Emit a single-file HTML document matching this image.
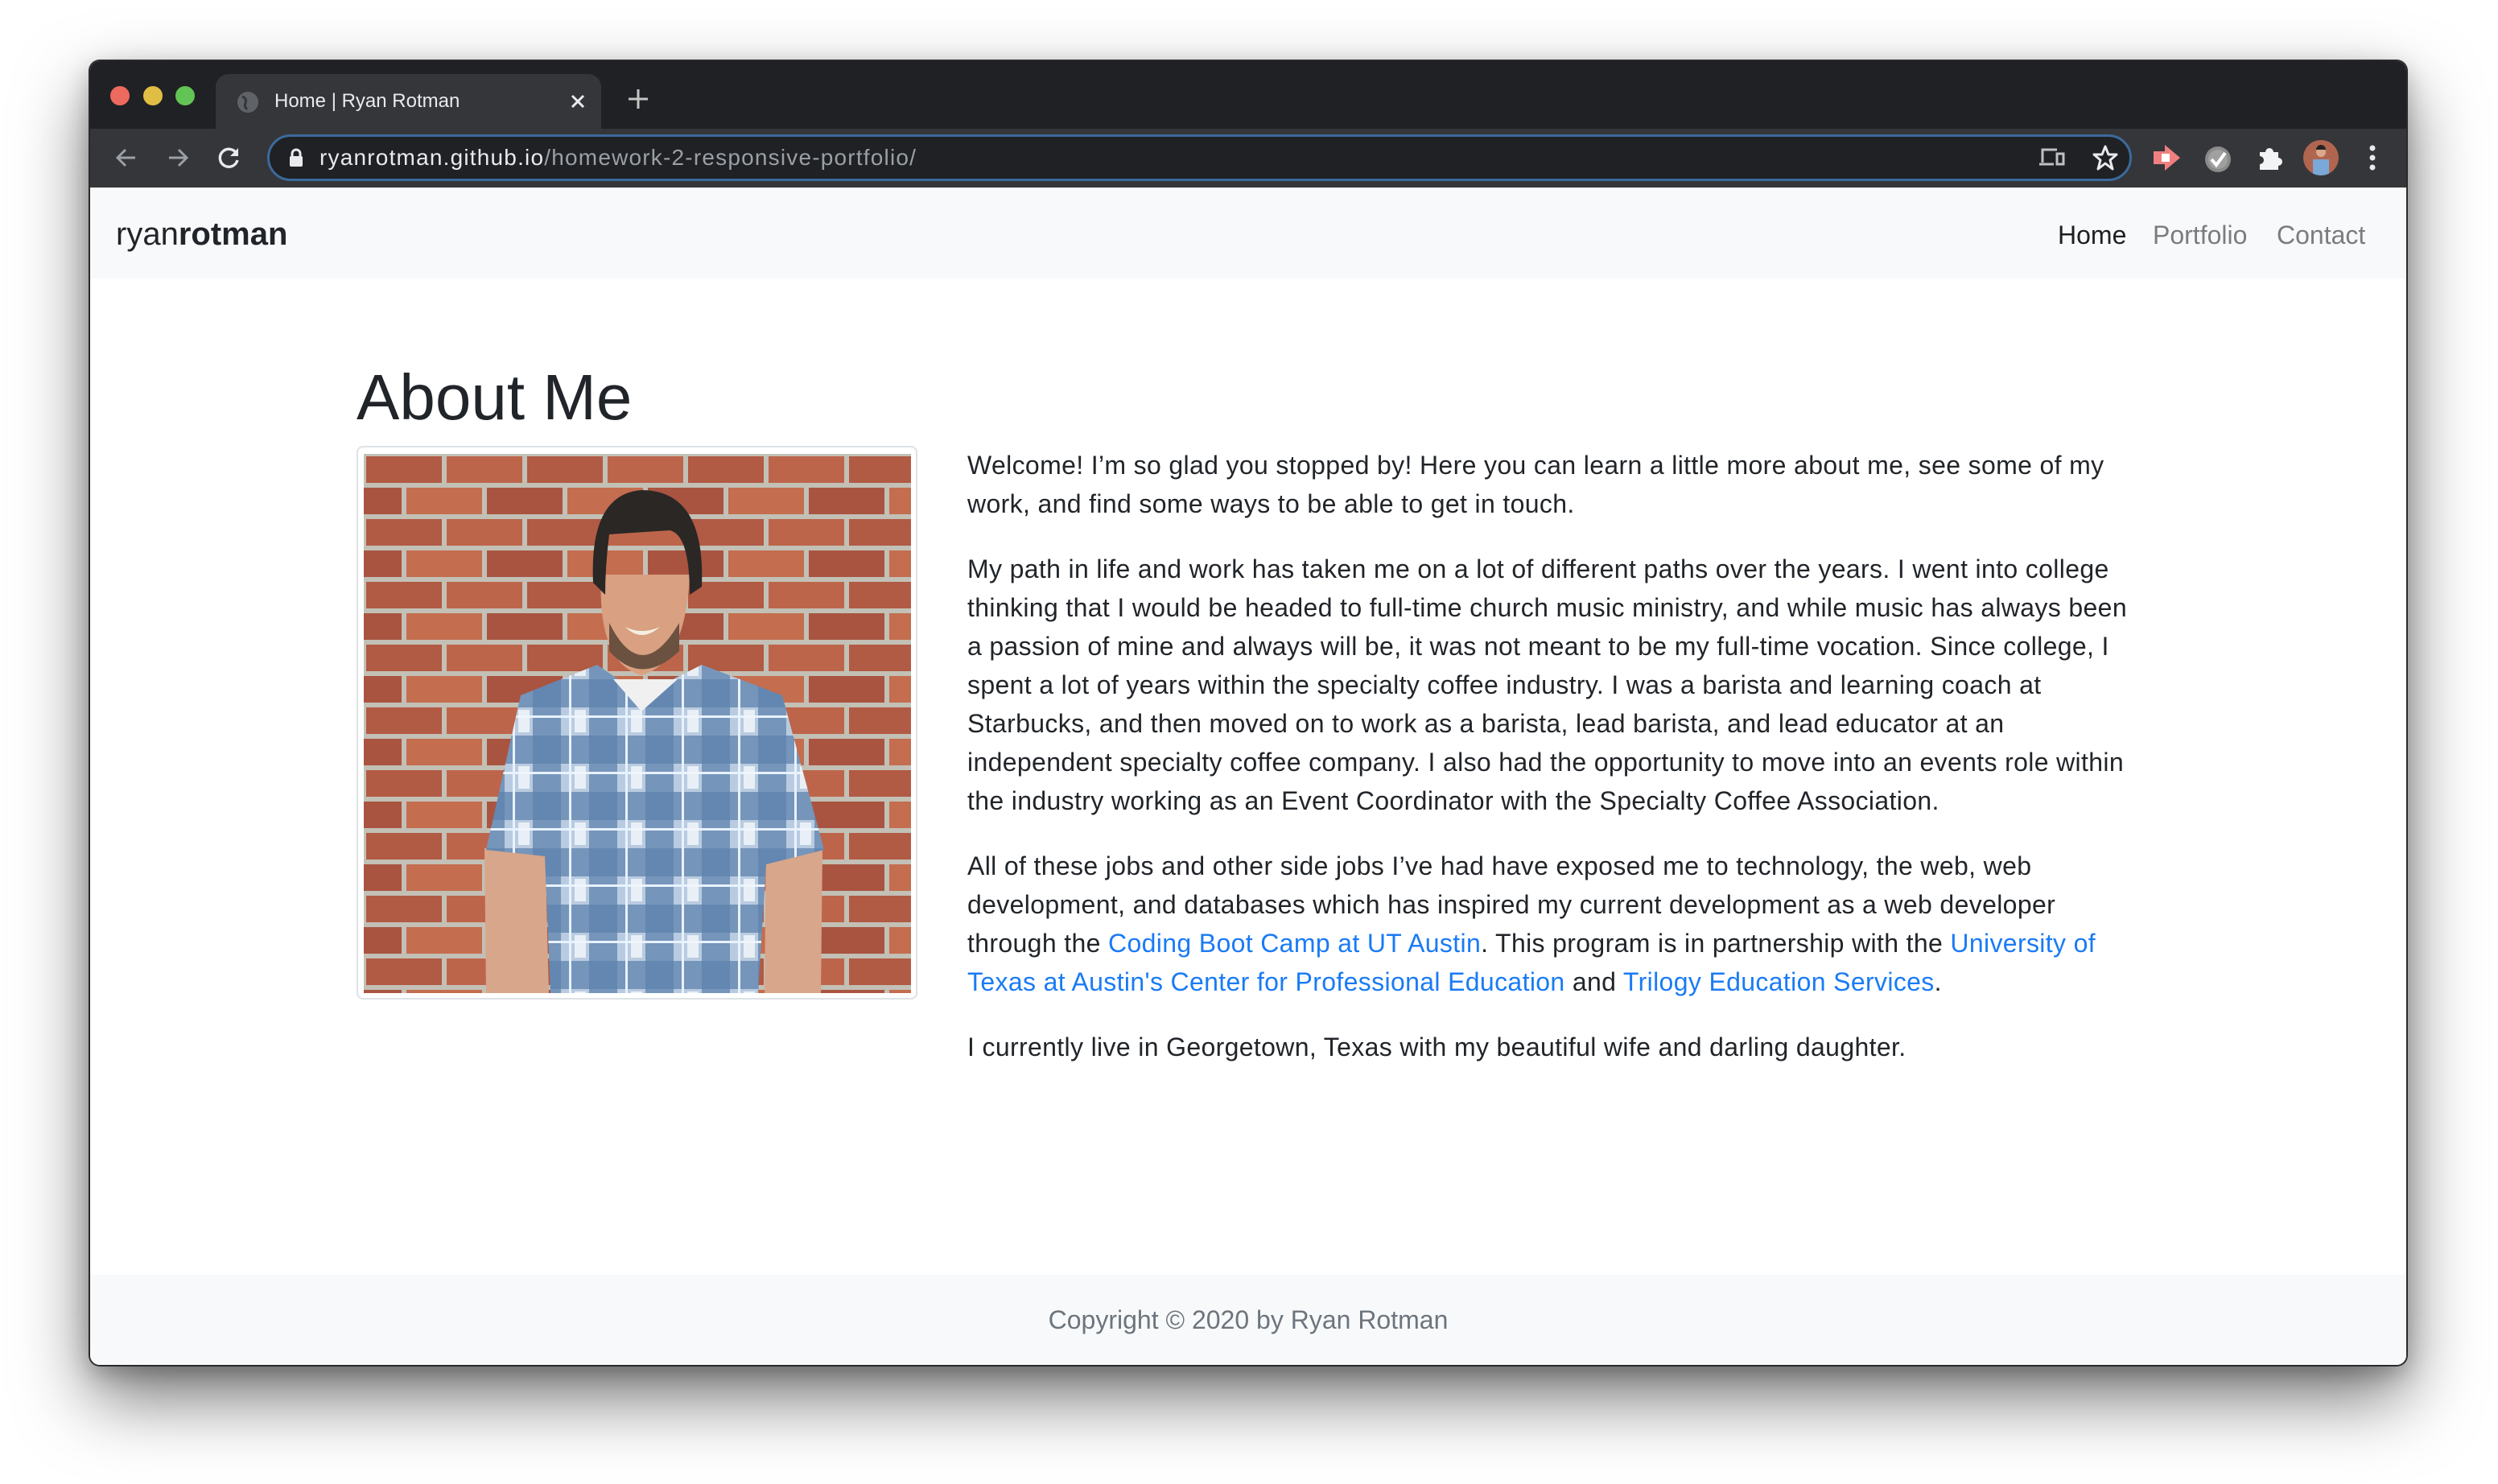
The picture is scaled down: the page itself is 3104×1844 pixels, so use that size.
<!DOCTYPE html>
<html><head><meta charset="utf-8">
<style>
*{margin:0;padding:0;box-sizing:border-box}
html,body{width:3104px;height:1844px;background:#fff;overflow:hidden;font-family:"Liberation Sans",Arial,sans-serif}
.win{position:absolute;left:112px;top:76px;width:2878px;height:1620px;border-radius:12px;overflow:hidden;background:#fff;box-shadow:0 0 0 2px #2a2a2a,0 40px 90px rgba(0,0,0,.55),0 10px 30px rgba(0,0,0,.25)}
.tabs{position:absolute;left:0;top:0;width:100%;height:84px;background:#202124}
.tb{position:absolute;left:0;top:84px;width:100%;height:73px;background:#35363a}
.dot{position:absolute;top:31px;width:24px;height:24px;border-radius:50%}
.tab{position:absolute;left:156px;top:16px;width:479px;height:70px;background:#35363a;border-radius:16px 16px 0 0}
.tab span{position:absolute;left:73px;top:20px;color:#e8eaed;font-size:24px}
.omni{position:absolute;left:220px;top:7px;width:2317px;height:58px;border-radius:29px;background:#202124;border:3px solid #3b6a9c}
.url{position:absolute;left:62px;top:10px;font-size:28px;color:#e8eaed;white-space:nowrap;letter-spacing:1.2px}
.url i{font-style:normal;color:#9aa0a6}
.nav{position:absolute;left:0;top:157px;width:100%;height:113px;background:#f8f9fa}
.brand{position:absolute;left:32px;top:36px;font-size:40px;color:#212529}
.nl{position:absolute;top:41px;font-size:32px;color:#7a7c7f}
h1{position:absolute;left:331px;top:372px;font-size:80px;font-weight:500;color:#212529}
.frame{position:absolute;left:331px;top:478px;width:697px;height:688px;border:2px solid #dee2e6;border-radius:8px;background:#fff}
.txt{position:absolute;left:1090px;top:478px;font-size:32px;line-height:48px;color:#212529;white-space:nowrap;letter-spacing:0.35px}
.txt p{margin-bottom:33px}
.txt a{color:#1a7bf5;text-decoration:none}
.foot{position:absolute;left:0;top:1508px;width:100%;height:112px;background:#f8f9fa;text-align:center;font-size:32px;line-height:112px;color:#6c757d}
</style></head><body>
<div class="win">
 <div class="tabs">
  <div class="dot" style="left:25px;background:#ed6a5e"></div>
  <div class="dot" style="left:66px;background:#e0be45"></div>
  <div class="dot" style="left:106px;background:#61c454"></div>
  <div class="tab"><svg style="position:absolute;left:25px;top:20px" width="30" height="30" viewBox="0 0 30 30"><circle cx="15" cy="15" r="13" fill="#5f6368"/><path d="M8 8 q6 2 4 8 q-2 4 2 8" stroke="#35363a" stroke-width="3" fill="none"/></svg><span>Home | Ryan Rotman</span>
  <svg style="position:absolute;left:440px;top:24px" width="20" height="20" viewBox="0 0 20 20"><path d="M3 3L17 17M17 3L3 17" stroke="#e8eaed" stroke-width="3"/></svg></div>
  <svg style="position:absolute;left:668px;top:34px" width="26" height="26" viewBox="0 0 26 26"><path d="M13 1V25M1 13H25" stroke="#c4c7c5" stroke-width="3"/></svg>
 </div>
 <div class="tb">
  <svg style="position:absolute;left:30px;top:21px" width="30" height="30" viewBox="0 0 30 30"><path d="M26 15H5M14 5L4 15L14 25" stroke="#9aa0a6" stroke-width="3" fill="none"/></svg>
  <svg style="position:absolute;left:94px;top:21px" width="30" height="30" viewBox="0 0 30 30"><path d="M4 15H25M16 5L26 15L16 25" stroke="#9aa0a6" stroke-width="3" fill="none"/></svg>
  <svg style="position:absolute;left:158px;top:21px" width="30" height="30" viewBox="0 0 30 30"><path d="M24 10A11 11 0 1 0 25 18" stroke="#e8eaed" stroke-width="3.4" fill="none"/><path d="M26 3V13H16Z" fill="#e8eaed"/></svg>
  <div class="omni">
   <svg style="position:absolute;left:24px;top:14px" width="18" height="24" viewBox="0 0 18 24"><path d="M4 11V7a5 5 0 0 1 10 0v4" stroke="#e8eaed" stroke-width="3" fill="none"/><rect x="1" y="10" width="16" height="13" rx="2" fill="#e8eaed"/></svg>
   <div class="url">ryanrotman.github.io<i>/homework-2-responsive-portfolio/</i></div>
   <svg style="position:absolute;left:2197px;top:12px" width="34" height="28" viewBox="0 0 34 28"><path d="M6 20V4H24M2 22H20" stroke="#bdc1c6" stroke-width="3" fill="none"/><rect x="24" y="9" width="8" height="13" stroke="#bdc1c6" stroke-width="3" fill="none"/></svg>
   <svg style="position:absolute;left:2264px;top:9px" width="34" height="34" viewBox="0 0 34 34"><path d="M17 3L21 13L31 13L23 20L26 31L17 24L8 31L11 20L3 13L13 13Z" stroke="#e8eaed" stroke-width="3" fill="none" stroke-linejoin="round"/></svg>
  </div>
  <svg style="position:absolute;left:2564px;top:20px" width="34" height="32" viewBox="0 0 34 32"><path d="M0 8H14L14 0L33 16L14 32L14 24H0Z" fill="#f08080"/><rect x="10" y="11" width="10" height="10" fill="#fff"/></svg>
  <svg style="position:absolute;left:2627px;top:21px" width="34" height="34" viewBox="0 0 34 34"><circle cx="17" cy="17" r="16" fill="#8a8a8a"/><circle cx="17" cy="17" r="12" fill="#a0a0a0"/><path d="M9 17L15 24L26 9" stroke="#fff" stroke-width="4" fill="none"/></svg>
  <svg style="position:absolute;left:2693px;top:20px" width="32" height="32" viewBox="0 0 32 32"><path d="M3 9H10A5 5 0 0 1 20 9H26V16A5 5 0 0 1 26 26V31H3V24A5 5 0 0 0 3 14Z" fill="#f1f3f4"/></svg>
  <svg style="position:absolute;left:2750px;top:14px" width="44" height="44" viewBox="0 0 44 44"><defs><clipPath id="ac"><circle cx="22" cy="22" r="22"/></clipPath></defs><g clip-path="url(#ac)"><rect width="44" height="44" fill="#b0654f"/><rect x="12" y="24" width="20" height="20" fill="#7aa8d8"/><circle cx="22" cy="15" r="6" fill="#d9a98a"/><path d="M16 12a6 6 0 0 1 12 0z" fill="#222"/></g></svg>
  <svg style="position:absolute;left:2830px;top:20px" width="12" height="34" viewBox="0 0 12 34"><circle cx="6" cy="4" r="3.5" fill="#e8eaed"/><circle cx="6" cy="16" r="3.5" fill="#e8eaed"/><circle cx="6" cy="28" r="3.5" fill="#e8eaed"/></svg>
 </div>
 <div class="nav">
  <div class="brand">ryan<b>rotman</b></div>
  <div class="nl" style="left:2445px;color:#1d1f21">Home</div>
  <div class="nl" style="left:2563px">Portfolio</div>
  <div class="nl" style="left:2717px">Contact</div>
 </div>
 <h1>About Me</h1>
 <div class="frame">
  <svg style="position:absolute;left:7px;top:8px" width="680" height="670" viewBox="0 0 680 670">
   <defs>
    <pattern id="brick" width="200" height="78" patternUnits="userSpaceOnUse">
     <rect width="200" height="78" fill="#c3c0b6"/>
     <rect x="3" y="3" width="94" height="33" fill="#b15a44"/>
     <rect x="103" y="3" width="94" height="33" fill="#bd654b"/>
     <rect x="-47" y="42" width="94" height="33" fill="#a95441"/>
     <rect x="53" y="42" width="94" height="33" fill="#c46d4f"/>
     <rect x="153" y="42" width="94" height="33" fill="#a95441"/>
    </pattern>
    <pattern id="plaid" width="70" height="70" patternUnits="userSpaceOnUse">
     <rect width="70" height="70" fill="#b9cbe0"/>
     <rect x="0" y="0" width="35" height="70" fill="#5f82ad" opacity=".75"/>
     <rect x="0" y="0" width="70" height="35" fill="#5f82ad" opacity=".75"/>
     <rect x="45" y="0" width="3" height="70" fill="#e8f2ff"/>
     <rect x="0" y="45" width="70" height="3" fill="#e8f2ff"/>
     <rect x="52" y="38" width="14" height="28" fill="#f4f7fb" opacity=".8"/>
    </pattern>
   </defs>
   <rect width="680" height="670" fill="url(#brick)"/>
   <path d="M152 670L150 490L225 480L230 670Z" fill="#d8a68a"/>
   <path d="M500 480L570 490L568 670L498 670Z" fill="#d8a68a"/>
   <path d="M195 300L290 262L345 300L420 262L520 300L572 492L500 510L490 670L232 670L225 500L152 492Z" fill="url(#plaid)"/>
   <path d="M310 280L345 320L390 280Z" fill="#f0f0f0"/>
   <path d="M295 150Q290 260 345 275Q400 260 405 150Z" fill="#d9a082"/>
   <path d="M305 210Q345 290 392 210L392 245Q345 290 305 245Z" fill="#6b5140"/>
   <path d="M325 215Q345 235 368 215Q345 225 325 215Z" fill="#f4efe0"/>
   <path d="M285 160Q280 50 345 45Q425 45 420 165L405 175Q405 100 380 95L305 100Q300 140 300 175Z" fill="#2a2725"/>
  </svg>
 </div>
 <div class="txt">
  <p>Welcome! I’m so glad you stopped by! Here you can learn a little more about me, see some of my<br>work, and find some ways to be able to get in touch.</p>
  <p>My path in life and work has taken me on a lot of different paths over the years. I went into college<br>thinking that I would be headed to full-time church music ministry, and while music has always been<br>a passion of mine and always will be, it was not meant to be my full-time vocation. Since college, I<br>spent a lot of years within the specialty coffee industry. I was a barista and learning coach at<br>Starbucks, and then moved on to work as a barista, lead barista, and lead educator at an<br>independent specialty coffee company. I also had the opportunity to move into an events role within<br>the industry working as an Event Coordinator with the Specialty Coffee Association.</p>
  <p>All of these jobs and other side jobs I’ve had have exposed me to technology, the web, web<br>development, and databases which has inspired my current development as a web developer<br>through the <a>Coding Boot Camp at UT Austin</a>. This program is in partnership with the <a>University of<br>Texas at Austin's Center for Professional Education</a> and <a>Trilogy Education Services</a>.</p>
  <p>I currently live in Georgetown, Texas with my beautiful wife and darling daughter.</p>
 </div>
 <div class="foot">Copyright © 2020 by Ryan Rotman</div>
</div>
</body></html>
